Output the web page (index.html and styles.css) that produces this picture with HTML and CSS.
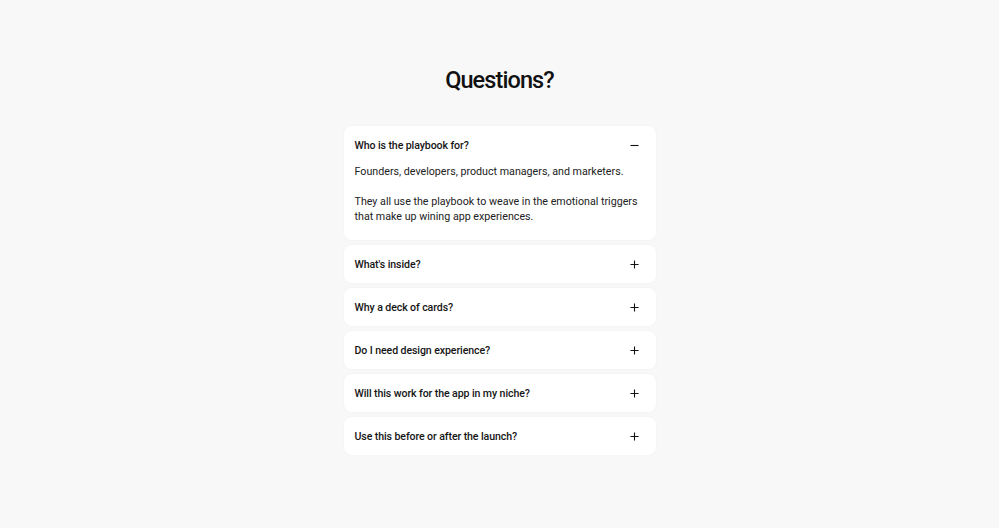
FILE: index.html
```html
<!DOCTYPE html>
<html>
<head>
  <link rel="stylesheet" href="styles.css">
</head>
<body>
  <section class="faq">
    <h1 class="faq-title">Questions?</h1>

    <div class="faq-list">
      <div class="faq-item open">
        <div class="faq-head">
          <span>Who is the playbook for?</span>
          <svg class="faq-icon" viewBox="0 0 10 10"><path d="M0.5 5h9" /></svg>
        </div>
        <div class="faq-body">
          <p>Founders, developers, product managers, and marketers.</p>
          <p>They all use the playbook to weave in the emotional triggers that make up wining app experiences.</p>
        </div>
      </div>
      <div class="faq-item">
        <div class="faq-head">
          <span>What's inside?</span>
          <svg class="faq-icon" viewBox="0 0 10 10"><path d="M0.5 5h9M5 0.5v9" /></svg>
        </div>
      </div>
      <div class="faq-item">
        <div class="faq-head">
          <span>Why a deck of cards?</span>
          <svg class="faq-icon" viewBox="0 0 10 10"><path d="M0.5 5h9M5 0.5v9" /></svg>
        </div>
      </div>
      <div class="faq-item">
        <div class="faq-head">
          <span>Do I need design experience?</span>
          <svg class="faq-icon" viewBox="0 0 10 10"><path d="M0.5 5h9M5 0.5v9" /></svg>
        </div>
      </div>
      <div class="faq-item">
        <div class="faq-head">
          <span>Will this work for the app in my niche?</span>
          <svg class="faq-icon" viewBox="0 0 10 10"><path d="M0.5 5h9M5 0.5v9" /></svg>
        </div>
      </div>
      <div class="faq-item">
        <div class="faq-head">
          <span>Use this before or after the launch?</span>
          <svg class="faq-icon" viewBox="0 0 10 10"><path d="M0.5 5h9M5 0.5v9" /></svg>
        </div>
      </div>
    </div>
  </section>
</body>
</html>
```

FILE: styles.css
```css
body {
  margin: 0;
  background-color: #f8f8f8;
  font-family: Roboto, "Liberation Sans", sans-serif;
  color: #111;
}

.faq {
  display: flex;
  flex-direction: column;
  align-items: center;
  padding-top: 64px;
}

.faq-title {
  margin: 0 0 30px;
  font-size: 23.5px;
  font-weight: 500;
  letter-spacing: -0.9px;
  line-height: 32px;
}

.faq-list {
  display: flex;
  flex-direction: column;
  gap: 5px;
  width: 312px;
}

.faq-item {
  background-color: #fff;
  border-radius: 8px;
  box-shadow: 0 0 3px rgba(0, 0, 0, 0.04);
  padding: 0 11px;
}

.faq-head {
  display: flex;
  align-items: center;
  justify-content: space-between;
  height: 38px;
  font-size: 10.6px;
  font-weight: 500;
  letter-spacing: -0.1px;
  color: #151515;
}

.faq-icon {
  width: 9px;
  height: 9px;
  margin-right: 6px;
  stroke: #111;
  stroke-width: 1.2;
  fill: none;
}

.faq-body {
  padding-bottom: 16px;
  font-size: 10.7px;
  line-height: 15px;
  color: #222;
}

.faq-body p {
  margin: 0 0 15px;
}

.faq-body p:last-child {
  margin-bottom: 0;
}
```
